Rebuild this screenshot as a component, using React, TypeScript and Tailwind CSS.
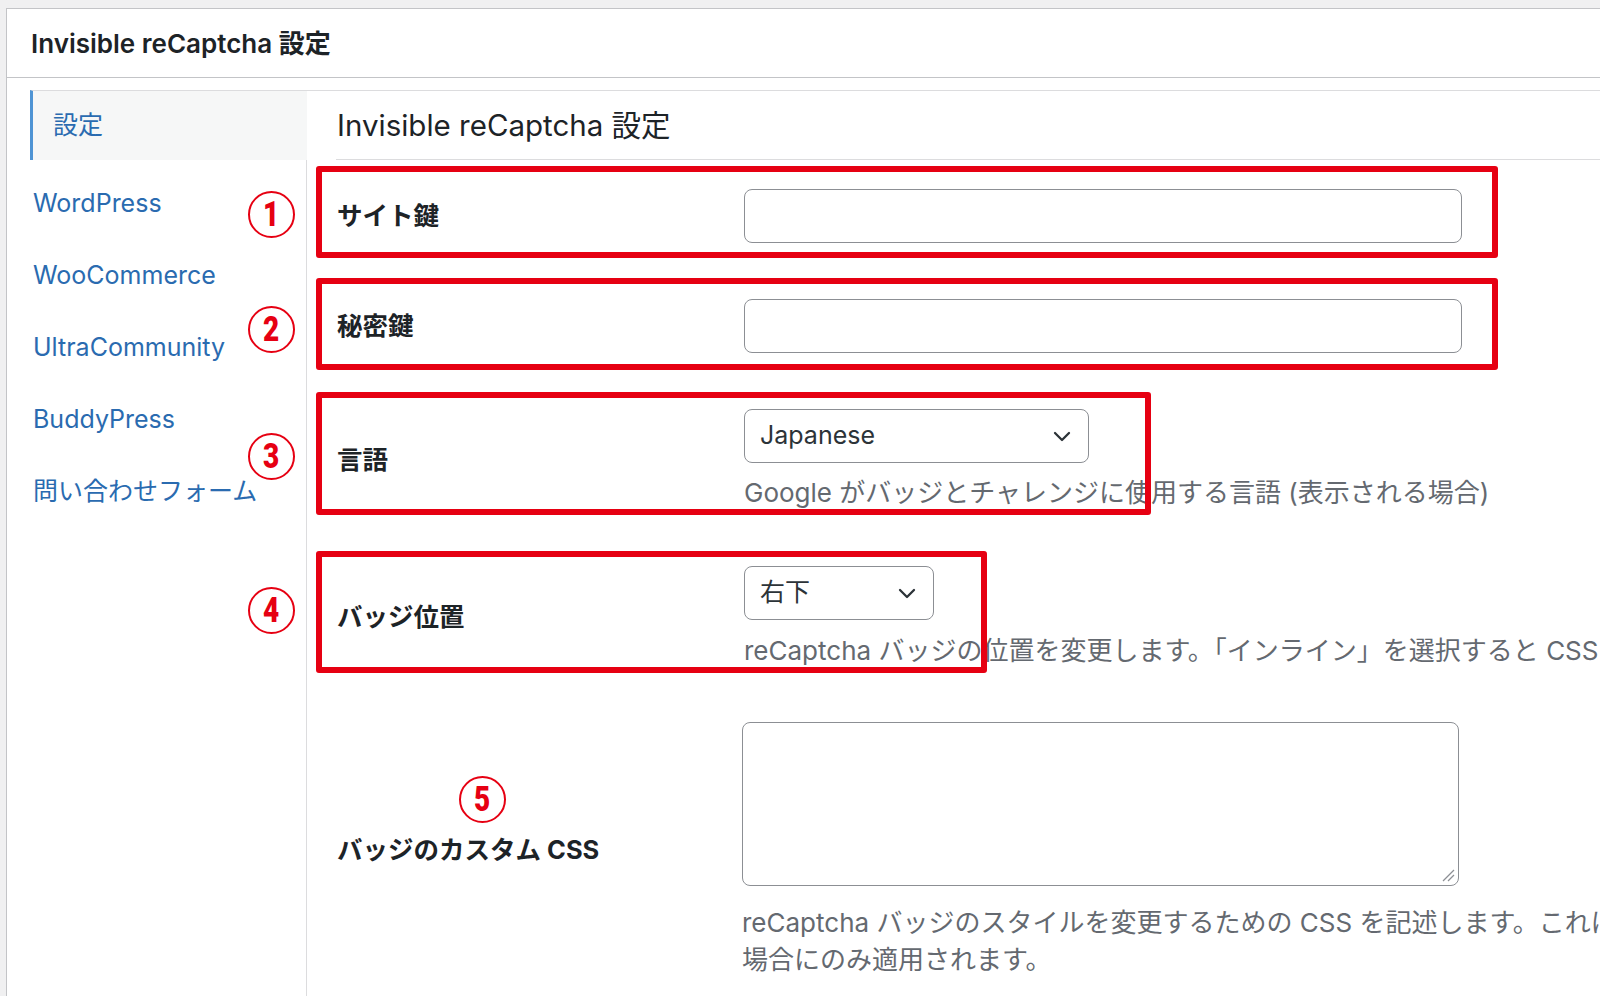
import React from "react";

function Circled({ n, x, y }: { n: string; x: number; y: number }) {
  return (
    <div
      className="absolute flex h-[47px] w-[47px] items-center justify-center rounded-full border-2 border-[#e60012] bg-white"
      style={{ left: x - 23.5, top: y - 23.5 }}
    >
      <span className="scale-x-80 font-['Roboto',sans-serif] text-[35px] font-black leading-none text-[#e60012]">
        {n}
      </span>
    </div>
  );
}

function RedBox({ l, t, w, h }: { l: number; t: number; w: number; h: number }) {
  return (
    <div
      className="pointer-events-none absolute rounded-[3px] border-[6px] border-[#e60012]"
      style={{ left: l, top: t, width: w, height: h }}
    />
  );
}

function Chevron() {
  return (
    <svg width="18" height="11" viewBox="0 0 18 11" className="shrink-0">
      <polyline points="2,2 9,9 16,2" fill="none" stroke="#2c3338" strokeWidth="2.3" strokeLinecap="round" strokeLinejoin="round" />
    </svg>
  );
}

export default function App() {
  const links = ["WordPress", "WooCommerce", "UltraCommunity", "BuddyPress", "問い合わせフォーム"];
  return (
    <div className="relative h-[996px] w-[1600px] overflow-hidden bg-[#f0f0f1] font-['Inter','Noto_Sans_CJK_JP',sans-serif] text-[#1d2327]">
      <div className="ml-[6px] mt-[8px] flex h-[988px] w-[1700px] flex-col border-l border-t border-[#c3c4c7] bg-white">
        {/* header */}
        <div className="flex h-[69px] shrink-0 items-center border-b border-[#c3c4c7] pl-[24px]">
          <h1 className="whitespace-nowrap text-[26px] font-semibold">Invisible reCaptcha 設定</h1>
        </div>
        {/* body */}
        <div className="flex flex-1">
          {/* sidebar */}
          <div className="flex w-[300px] shrink-0 flex-col pt-[12px]">
            <div className="ml-[23px] flex h-[70px] items-center border-l-[3px] border-t border-l-[#4f94d4] border-t-[#dcdcde] bg-[#f6f7f7] pl-[20px] text-[25px] text-[#2a6bb0]">
              設定
            </div>
            <div className="flex-1 border-r border-[#dcdcde] pt-[8px]">
              {links.map((l) => (
                <div key={l} className="flex h-[72px] items-center whitespace-nowrap pl-[26px] text-[25px] text-[#2a6bb0]">
                  {l}
                </div>
              ))}
            </div>
          </div>
          {/* content */}
          <div className="mt-[12px] min-w-0 flex-1 border-t border-[#dcdcde]">
            <div className="ml-[29px]">
              <div className="flex h-[69px] items-center border-b border-[#dcdcde] pl-[1px]">
                <h2 className="whitespace-nowrap text-[29.5px] font-normal text-[#1d2327]">Invisible reCaptcha 設定</h2>
              </div>
              <div className="flex flex-col pt-[29px]">
                {/* row 1 */}
                <div className="flex items-center">
                  <div className="w-[408px] shrink-0 pl-[1px] text-[25.5px] font-bold">サイト鍵</div>
                  <div className="h-[54px] w-[718px] rounded-[8px] border-[1.5px] border-[#8c8f94] bg-white" />
                </div>
                {/* row 2 */}
                <div className="mt-[56px] flex items-center">
                  <div className="w-[408px] shrink-0 pl-[1px] text-[25.5px] font-bold">秘密鍵</div>
                  <div className="h-[54px] w-[718px] rounded-[8px] border-[1.5px] border-[#8c8f94] bg-white" />
                </div>
                {/* row 3 */}
                <div className="mt-[56px] flex items-center">
                  <div className="w-[408px] shrink-0 pl-[1px] text-[25.5px] font-bold">言語</div>
                  <div className="flex flex-col">
                    <div className="flex h-[54px] w-[345px] items-center justify-between rounded-[8px] border-[1.5px] border-[#8c8f94] bg-white pl-[15px] pr-[17px] text-[25px] text-[#2c3338]">
                      <span>Japanese</span>
                      <Chevron />
                    </div>
                    <div className="mt-[11px] whitespace-nowrap text-[26px] leading-[37px] text-[#646970]">
                      Google がバッジとチャレンジに使用する言語 (表示される場合)
                    </div>
                  </div>
                </div>
                {/* row 4 */}
                <div className="mt-[55px] flex items-center">
                  <div className="w-[408px] shrink-0 pl-[1px] text-[25.5px] font-bold">バッジ位置</div>
                  <div className="flex flex-col">
                    <div className="flex h-[54px] w-[190px] items-center justify-between rounded-[8px] border-[1.5px] border-[#8c8f94] bg-white pl-[15px] pr-[17px] text-[25px] text-[#2c3338]">
                      <span>右下</span>
                      <Chevron />
                    </div>
                    <div className="mt-[12px] whitespace-nowrap text-[26px] leading-[37px] text-[#646970]">
                      reCaptcha バッジの位置を変更します。「インライン」を選択すると CSS で位置を調整できます。
                    </div>
                  </div>
                </div>
                {/* row 5 */}
                <div className="mt-[53px] flex items-center">
                  <div className="w-[408px] shrink-0 pl-[1px] text-[25.5px] font-bold">バッジのカスタム CSS</div>
                  <div className="-ml-[2px] flex flex-col">
                    <div className="relative h-[164px] w-[717px] rounded-[8px] border-[1.5px] border-[#8c8f94] bg-white">
                      <svg width="14" height="14" viewBox="0 0 14 14" className="absolute bottom-[3px] right-[3px]">
                        <line x1="2" y1="13" x2="13" y2="2" stroke="#8c8f94" strokeWidth="1.3" />
                        <line x1="7" y1="13" x2="13" y2="7" stroke="#8c8f94" strokeWidth="1.3" />
                      </svg>
                    </div>
                    <div className="mt-[18px] whitespace-nowrap text-[26px] leading-[37px] text-[#646970]">
                      reCaptcha バッジのスタイルを変更するための CSS を記述します。これは「インライン」が選択されている
                      <br />
                      場合にのみ適用されます。
                    </div>
                  </div>
                </div>
              </div>
            </div>
          </div>
        </div>
      </div>

      {/* annotations */}
      <RedBox l={316} t={166} w={1182} h={92} />
      <RedBox l={316} t={278} w={1182} h={92} />
      <RedBox l={316} t={392} w={835} h={123} />
      <RedBox l={316} t={551} w={671} h={122} />
      <Circled n="1" x={271} y={214} />
      <Circled n="2" x={271} y={329} />
      <Circled n="3" x={271} y={456} />
      <Circled n="4" x={271} y={610} />
      <Circled n="5" x={482} y={799} />
    </div>
  );
}
